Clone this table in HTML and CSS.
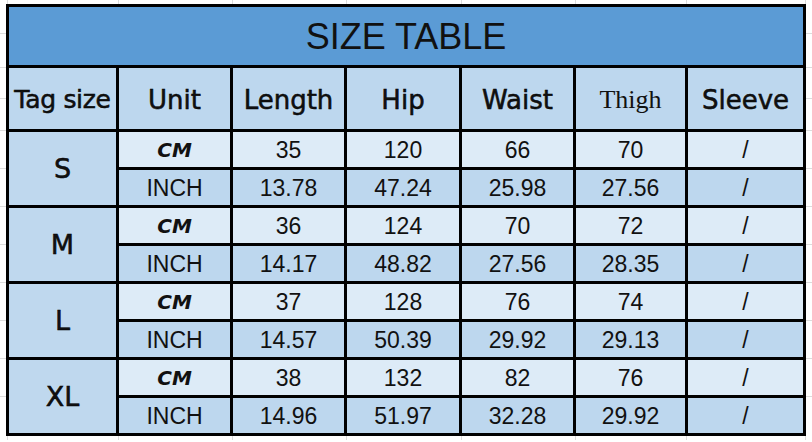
FILE: index.html
```html
<!DOCTYPE html>
<html>
<head>
<meta charset="utf-8">
<link rel="stylesheet" href="styles.css">
</head>
<body>
<div class="page">
  <div class="sheet">
    <div class="title">SIZE TABLE</div>

    <div class="head comic tag">Tag size</div>
    <div class="head comic">Unit</div>
    <div class="head comic">Length</div>
    <div class="head comic">Hip</div>
    <div class="head comic">Waist</div>
    <div class="head serif">Thigh</div>
    <div class="head comic">Sleeve</div>

    <div class="size comic">S</div>
    <div class="cm unit">CM</div><div class="cm num">35</div><div class="cm num">120</div><div class="cm num">66</div><div class="cm num">70</div><div class="cm num">/</div>
    <div class="inch unit-inch">INCH</div><div class="inch num">13.78</div><div class="inch num">47.24</div><div class="inch num">25.98</div><div class="inch num">27.56</div><div class="inch num">/</div>

    <div class="size comic">M</div>
    <div class="cm unit">CM</div><div class="cm num">36</div><div class="cm num">124</div><div class="cm num">70</div><div class="cm num">72</div><div class="cm num">/</div>
    <div class="inch unit-inch">INCH</div><div class="inch num">14.17</div><div class="inch num">48.82</div><div class="inch num">27.56</div><div class="inch num">28.35</div><div class="inch num">/</div>

    <div class="size comic">L</div>
    <div class="cm unit">CM</div><div class="cm num">37</div><div class="cm num">128</div><div class="cm num">76</div><div class="cm num">74</div><div class="cm num">/</div>
    <div class="inch unit-inch">INCH</div><div class="inch num">14.57</div><div class="inch num">50.39</div><div class="inch num">29.92</div><div class="inch num">29.13</div><div class="inch num">/</div>

    <div class="size comic">XL</div>
    <div class="cm unit">CM</div><div class="cm num">38</div><div class="cm num">132</div><div class="cm num">82</div><div class="cm num">76</div><div class="cm num">/</div>
    <div class="inch unit-inch">INCH</div><div class="inch num">14.96</div><div class="inch num">51.97</div><div class="inch num">32.28</div><div class="inch num">29.92</div><div class="inch num">/</div>
  </div>
</div>
</body>
</html>
```
FILE: styles.css
```css
html {
  background-color: #ffffff;
  background-repeat: no-repeat;
  background-image:
    linear-gradient(#dcdcdc, #dcdcdc),
    linear-gradient(#dcdcdc, #dcdcdc),
    linear-gradient(#dcdcdc, #dcdcdc),
    linear-gradient(#dcdcdc, #dcdcdc),
    linear-gradient(#dcdcdc, #dcdcdc),
    linear-gradient(#dcdcdc, #dcdcdc),
    linear-gradient(#dcdcdc, #dcdcdc),
    linear-gradient(#dcdcdc, #dcdcdc),
    linear-gradient(#dcdcdc, #dcdcdc),
    linear-gradient(#dcdcdc, #dcdcdc),
    linear-gradient(#dcdcdc, #dcdcdc),
    linear-gradient(#dcdcdc, #dcdcdc),
    linear-gradient(#dcdcdc, #dcdcdc),
    linear-gradient(#dcdcdc, #dcdcdc),
    linear-gradient(#dcdcdc, #dcdcdc),
    linear-gradient(#dcdcdc, #dcdcdc),
    linear-gradient(#dcdcdc, #dcdcdc),
    linear-gradient(#dcdcdc, #dcdcdc),
    linear-gradient(#dcdcdc, #dcdcdc);
  background-size:
    100% 1px, 100% 1px, 100% 1px, 100% 1px, 100% 1px, 100% 1px,
    100% 1px, 100% 1px, 100% 1px, 100% 1px, 100% 1px,
    1px 100%, 1px 100%, 1px 100%, 1px 100%, 1px 100%, 1px 100%, 1px 100%, 1px 100%;
  background-position:
    0 33px, 0 67px, 0 98px, 0 130px, 0 168px, 0 206px,
    0 244px, 0 282px, 0 320px, 0 358px, 0 396px,
    7px 0, 118px 0, 232px 0, 346px 0, 461px 0, 575px 0, 686px 0, 805px 0;
}

body {
  margin: 0;
  background: transparent;
}

.page {
  padding: 4px 6px;
}

.sheet {
  width: 800px;
  box-sizing: border-box;
  display: grid;
  grid-template-columns: 107px 111px 111px 112px 111px 109px 115px;
  grid-template-rows: 58px 61px repeat(8, 35px);
  gap: 3px;
  padding: 3px;
  background: #000000;
}

.sheet > div {
  display: flex;
  align-items: center;
  justify-content: center;
  color: #111111;
  white-space: nowrap;
}

.title {
  grid-column: 1 / -1;
  background: #5b9bd5;
  font-family: "Liberation Sans", Arial, sans-serif;
  font-size: 36px;
  color: #141414;
  padding-top: 2px;
}

.head {
  background: #bdd7ee;
  font-size: 26px;
  padding-top: 2px;
}

.comic {
  font-family: "DejaVu Sans", sans-serif;
  color: #000000;
  -webkit-text-stroke: 0.5px #000000;
}

.head.tag {
  font-size: 25px;
  letter-spacing: -0.3px;
}

.serif {
  font-family: "Liberation Serif", "Times New Roman", serif;
  font-size: 26px;
  color: #000000;
}

.size {
  grid-row: span 2;
  grid-column: 1;
  background: #bfd8ee;
  font-size: 27px;
}

.cm {
  background: #ddebf7;
}

.inch {
  background: #bdd7ee;
}

.num,
.unit-inch {
  font-family: "Liberation Sans", Arial, sans-serif;
  font-size: 23px;
  color: #1c1c1c;
  padding-top: 2px;
}

.unit {
  font-family: "DejaVu Sans", sans-serif;
  font-weight: bold;
  font-style: italic;
  font-size: 20px;
  color: #000000;
}
```
